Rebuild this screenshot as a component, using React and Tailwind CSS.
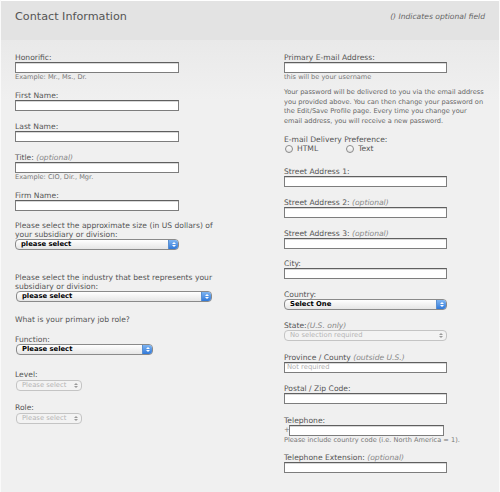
import React from 'react';

const font = { fontFamily: '"DejaVu Sans", Verdana, sans-serif' };

function Input({ className = 'w-[164px]', placeholder }) {
  return (
    <div className={`h-[11px] shrink-0 bg-white border border-[#7d7d7d] border-t-[#5f5f5f] shadow-[inset_0_1px_0_#d8d8d8] text-[6.8px] leading-[9px] pl-[2px] text-[#b0b0b0] ${className}`}>
      {placeholder}
    </div>
  );
}

function Select({ label, className = 'w-[164px]', disabled }) {
  return (
    <div className={`h-[11px] shrink-0 flex items-center rounded-[4px] border ${disabled ? 'border-[#c4c4c4] bg-[#f3f3f3]' : 'border-[#8a8a8a] bg-gradient-to-b from-white to-[#e6e6e6]'} overflow-hidden ${className}`}>
      <span className={`flex-1 pl-[5px] text-[6.8px] leading-[9px] ${disabled ? 'text-[#b5b5b5]' : 'text-black font-bold'}`}>{label}</span>
      <span className={`h-full w-[10px] flex flex-col items-center justify-center gap-[1px] ${disabled ? '' : 'bg-gradient-to-b from-[#7fb5f2] to-[#2f78d8] border-l border-[#5a8fd0]'}`}>
        <svg width="4" height="2" viewBox="0 0 4 2"><path d="M0 2 L2 0 L4 2Z" fill={disabled ? '#9a9a9a' : '#fff'} /></svg>
        <svg width="4" height="2" viewBox="0 0 4 2"><path d="M0 0 L2 2 L4 0Z" fill={disabled ? '#9a9a9a' : '#fff'} /></svg>
      </span>
    </div>
  );
}

function Label({ children, opt, className = '' }) {
  return (
    <div className={`text-[7.6px] leading-[9px] text-[#555] ${className}`}>
      {children}
      {opt && <span className="italic text-[#888]"> {opt}</span>}
    </div>
  );
}

function Hint({ children }) {
  return <div className="text-[6.6px] leading-[9px] text-[#777]">{children}</div>;
}

function Radio({ children }) {
  return (
    <div className="flex items-center gap-[4px]">
      <span className="w-[8px] h-[8px] rounded-full border border-[#8a8a8a] bg-gradient-to-b from-white to-[#e3e3e3]" />
      <span className="text-[7.6px] leading-[9px] text-[#555]">{children}</span>
    </div>
  );
}

export default function App() {
  return (
    <div style={font} className="w-[500px] h-[492px] bg-[#f0f0f0] border-x border-[#fafafa] overflow-hidden">
      <div className="h-[40px] bg-[#e3e3e3] border-t border-white flex items-start justify-between pl-[14px] pr-[14px]">
        <h1 className="mt-[9px] text-[11.2px] leading-[14px] text-[#555]">Contact Information</h1>
        <p className="mt-[10px] text-[7.6px] italic text-[#666]">() Indicates optional field</p>
      </div>

      <div className="bg-gradient-to-b from-[#e9e9e9] to-[#f0f0f0] to-[60px] grid grid-cols-[269px_1fr] pl-[14px]">
        {/* left column */}
        <div className="flex flex-col">
          <Label className="mt-[13px]">Honorific:</Label>
          <Input />
          <Hint>Example: Mr., Ms., Dr.</Hint>

          <Label className="mt-[9px]">First Name:</Label>
          <Input />

          <Label className="mt-[11px]">Last Name:</Label>
          <Input />

          <Label className="mt-[11px]" opt="(optional)">Title:</Label>
          <Input />
          <Hint>Example: CIO, Dir., Mgr.</Hint>

          <Label className="mt-[9px]">Firm Name:</Label>
          <Input />

          <Label className="mt-[10px] w-[206px]">Please select the approximate size (in US dollars) of your subsidiary or division:</Label>
          <Select label="please select" />

          <Label className="mt-[23px] w-[212px]">Please select the industry that best represents your subsidiary or division:</Label>
          <Select label="please select" className="w-[196px] ml-[1px]" />

          <Label className="mt-[13px]">What is your primary job role?</Label>

          <Label className="mt-[11px]">Function:</Label>
          <Select label="Please select" className="w-[137px] ml-[1px]" />

          <Label className="mt-[15px]">Level:</Label>
          <Select label="Please select" className="w-[66px] ml-[1px] mt-[1px]" disabled />

          <Label className="mt-[12px]">Role:</Label>
          <Select label="Please select" className="w-[66px] ml-[1px] mt-[1px]" disabled />
        </div>

        {/* right column */}
        <div className="flex flex-col">
          <Label className="mt-[13px]">Primary E-mail Address:</Label>
          <Input className="w-[163px]" />
          <Hint>this will be your username</Hint>

          <p className="mt-[6px] w-[205px] text-[6.6px] leading-[9.5px] text-[#666]">
            Your password will be delivered to you via the email address<br />
            you provided above. You can then change your password on<br />
            the Edit/Save Profile page. Every time you change your<br />
            email address, you will receive a new password.
          </p>

          <Label className="mt-[9px]">E-mail Delivery Preference:</Label>
          <div className="flex gap-[28px] pl-[1px] h-[9px] items-center">
            <Radio>HTML</Radio>
            <Radio>Text</Radio>
          </div>

          <Label className="mt-[14px]">Street Address 1:</Label>
          <Input className="w-[163px]" />

          <Label className="mt-[11px]" opt="(optional)">Street Address 2:</Label>
          <Input className="w-[163px]" />

          <Label className="mt-[11px]" opt="(optional)">Street Address 3:</Label>
          <Input className="w-[163px]" />

          <Label className="mt-[10px]">City:</Label>
          <Input className="w-[163px]" />

          <Label className="mt-[11px]">Country:</Label>
          <Select label="Select One" className="w-[163px]" />

          <Label className="mt-[11px]"><span>State:</span><span className="italic text-[#888]">(U.S. only)</span></Label>
          <Select label="No selection required" className="w-[163px]" disabled />

          <Label className="mt-[12px]" opt="(outside U.S.)">Province / County</Label>
          <Input className="w-[163px]" placeholder="Not required" />

          <Label className="mt-[11px]">Postal / Zip Code:</Label>
          <Input className="w-[163px]" />

          <Label className="mt-[12px]">Telephone:</Label>
          <div className="flex items-center">
            <span className="w-[5px] text-[7px] leading-[9px] text-[#777]">+</span>
            <Input className="w-[155px]" />
          </div>
          <Hint>Please include country code (i.e. North America = 1).</Hint>

          <Label className="mt-[8px]" opt="(optional)">Telephone Extension:</Label>
          <Input className="w-[163px]" />
        </div>
      </div>
    </div>
  );
}
